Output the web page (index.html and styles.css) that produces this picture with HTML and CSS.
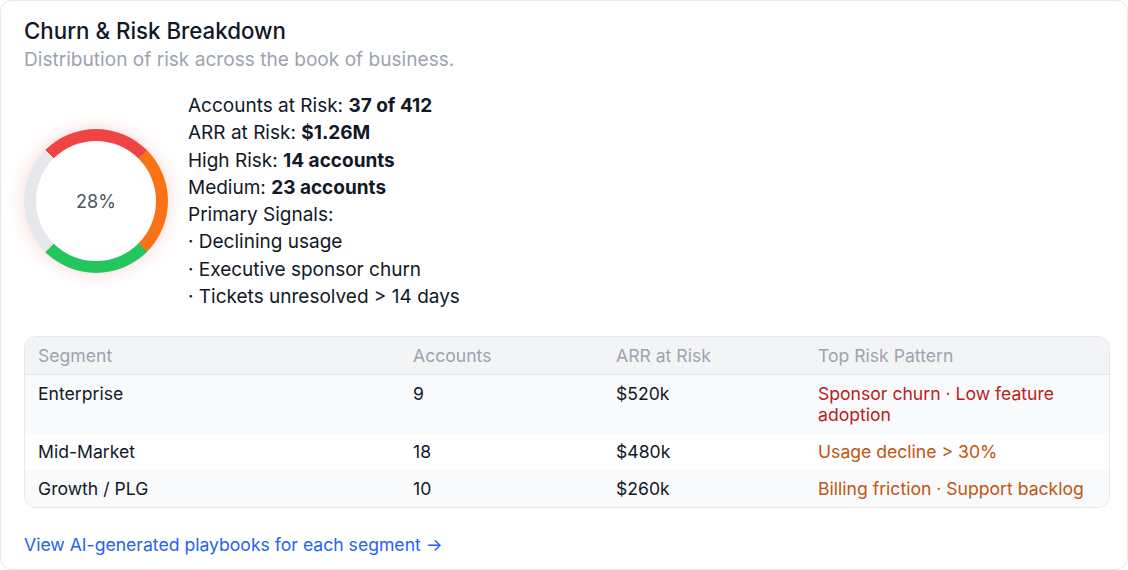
FILE: index.html
```html
<!DOCTYPE html>
<html lang="en">
<head>
<meta charset="utf-8">
<title>Churn &amp; Risk Breakdown</title>
<link rel="stylesheet" href="styles.css">
</head>
<body>
<section class="card">
  <h2 class="title">Churn &amp; Risk Breakdown</h2>
  <p class="subtitle">Distribution of risk across the book of business.</p>

  <div class="summary">
    <div class="donut">
      <div class="donut-hole">28%</div>
    </div>
    <ul class="stats">
      <li>Accounts at Risk: <strong>37 of 412</strong></li>
      <li>ARR at Risk: <strong>$1.26M</strong></li>
      <li>High Risk: <strong>14 accounts</strong></li>
      <li>Medium: <strong>23 accounts</strong></li>
      <li>Primary Signals:</li>
      <li>· Declining usage</li>
      <li>· Executive sponsor churn</li>
      <li>· Tickets unresolved &gt; 14 days</li>
    </ul>
  </div>

  <div class="table-wrap">
    <table class="risk-table">
      <colgroup>
        <col class="c-seg"><col class="c-acc"><col class="c-arr"><col class="c-pat">
      </colgroup>
      <thead>
        <tr><th>Segment</th><th>Accounts</th><th>ARR at Risk</th><th>Top Risk Pattern</th></tr>
      </thead>
      <tbody>
        <tr class="alt"><td>Enterprise</td><td>9</td><td>$520k</td><td class="pat-red">Sponsor churn · Low feature adoption</td></tr>
        <tr><td>Mid-Market</td><td>18</td><td>$480k</td><td class="pat-orange">Usage decline &gt; 30%</td></tr>
        <tr class="alt"><td>Growth / PLG</td><td>10</td><td>$260k</td><td class="pat-orange">Billing friction · Support backlog</td></tr>
      </tbody>
    </table>
  </div>

  <a class="link" href="#">View AI-generated playbooks for each segment →</a>
</section>
</body>
</html>
```

FILE: styles.css
```css
* { box-sizing: border-box; }
html, body { margin: 0; padding: 0; background: #ffffff; }
body {
  font-family: Inter, "Noto Sans", "Liberation Sans", sans-serif;
  color: #111827;
}
.card {
  width: 1128px;
  height: 570px;
  border: 1px solid #e5e7eb;
  border-radius: 12px;
  padding: 16px 17px 0 23px;
  background: #ffffff;
  display: flex;
  flex-direction: column;
}
.title {
  margin: 0;
  font-size: 22.3px;
  line-height: 28px;
  font-weight: 500;
  color: #111827;
}
.subtitle {
  margin: 0;
  font-size: 19.1px;
  line-height: 28px;
  color: #9ca3af;
}
.summary {
  display: flex;
  align-items: center;
  gap: 20px;
  margin-top: 19px;
}
.donut {
  width: 144px;
  height: 144px;
  border-radius: 50%;
  flex: none;
  background: conic-gradient(from -45deg, #ef4444 0 25%, #f97316 25% 50%, #22c55e 50% 75%, #e5e7eb 75% 100%);
  box-shadow: 0 0 18px rgba(239, 68, 68, 0.22);
  display: flex;
  align-items: center;
  justify-content: center;
}
.donut-hole {
  width: 120px;
  height: 120px;
  border-radius: 50%;
  background: #ffffff;
  display: flex;
  align-items: center;
  justify-content: center;
  font-size: 18px;
  color: #4b5563;
}
.stats {
  list-style: none;
  margin: 0;
  padding: 0;
  font-size: 19px;
  line-height: 27.3px;
  color: #111827;
}
.stats strong { font-weight: 700; }
.table-wrap {
  margin-top: 26px;
  border: 1px solid #e5e7eb;
  border-radius: 12px;
  overflow: hidden;
}
.risk-table {
  width: 100%;
  border-collapse: collapse;
  table-layout: fixed;
  font-size: 17.6px;
  line-height: 21px;
}
.c-seg { width: 375px; }
.c-acc { width: 203px; }
.c-arr { width: 202px; }
.risk-table th {
  text-align: left;
  font-weight: 400;
  color: #9ca3af;
  background: #f3f4f6;
  padding: 8px 13px;
  border-bottom: 1px solid #e5e7eb;
}
.risk-table td {
  text-align: left;
  vertical-align: top;
  padding: 8px 13px;
  color: #111827;
}
.risk-table tr.alt td { background: #f9fafb; }
.pat-red { color: #b91c1c !important; }
.pat-orange { color: #c2540f !important; }
.link {
  margin-top: 26px;
  font-size: 17.6px;
  line-height: 22px;
  color: #2563eb;
  text-decoration: none;
  align-self: flex-start;
}
```
